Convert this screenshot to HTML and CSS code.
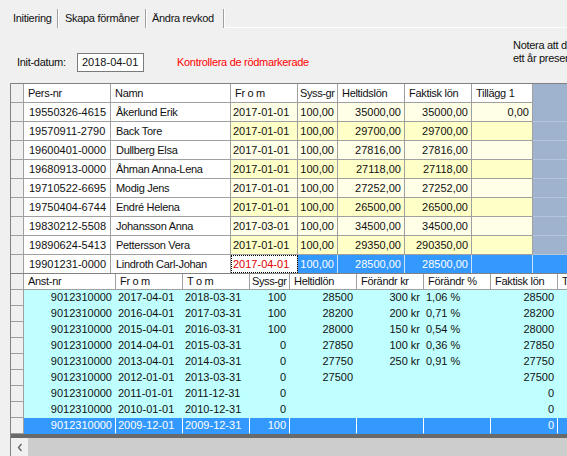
FILE: index.html
```html
<!DOCTYPE html>
<html lang="sv">
<head>
<meta charset="utf-8">
<title>Initiering</title>
<link rel="stylesheet" href="styles.css">
</head>
<body>
<div class="app">
  <div class="tabs">
    <div class="tab tab1 active">Initiering</div>
    <div class="tab tab2">Skapa förmåner</div>
    <div class="tab tab3">Ändra revkod</div>
    <div class="tab-fill"></div>
  </div>

  <div class="form-top">
    <span class="lbl">Init-datum:</span>
    <div class="textbox">2018-04-01</div>
    <span class="warn">Kontrollera de rödmarkerade</span>
    <div class="note">Notera att datum äldre än<br>ett år presenteras i rött</div>
  </div>

  <div class="grids">
    <div class="grid upper">
      <div class="row head">
        <div class="c rh"></div><div class="c h">Pers-nr</div><div class="c h">Namn</div><div class="c h">Fr o m</div><div class="c h h2">Syss-gr</div><div class="c h">Heltidslön</div><div class="c h">Faktisk lön</div><div class="c h">Tillägg 1</div><div class="c bgc"></div>
      </div>
      <div class="row odd">
        <div class="c rh"></div><div class="c w p5">19550326-4615</div><div class="c w p5 nm">Åkerlund Erik</div><div class="c y">2017-01-01</div><div class="c y r">100,00</div><div class="c y r">35000,00</div><div class="c y r">35000,00</div><div class="c y r">0,00</div><div class="c bgc"></div>
      </div>
      <div class="row even">
        <div class="c rh"></div><div class="c w p5">19570911-2790</div><div class="c w p5 nm">Back Tore</div><div class="c y">2017-01-01</div><div class="c y r">100,00</div><div class="c y r">29700,00</div><div class="c y r">29700,00</div><div class="c y r"></div><div class="c bgc"></div>
      </div>
      <div class="row odd">
        <div class="c rh"></div><div class="c w p5">19600401-0000</div><div class="c w p5 nm">Dullberg Elsa</div><div class="c y">2017-01-01</div><div class="c y r">100,00</div><div class="c y r">27816,00</div><div class="c y r">27816,00</div><div class="c y r"></div><div class="c bgc"></div>
      </div>
      <div class="row even">
        <div class="c rh"></div><div class="c w p5">19680913-0000</div><div class="c w p5 nm">Åhman Anna-Lena</div><div class="c y">2017-01-01</div><div class="c y r">100,00</div><div class="c y r">27118,00</div><div class="c y r">27118,00</div><div class="c y r"></div><div class="c bgc"></div>
      </div>
      <div class="row odd">
        <div class="c rh"></div><div class="c w p5">19710522-6695</div><div class="c w p5 nm">Modig Jens</div><div class="c y">2017-01-01</div><div class="c y r">100,00</div><div class="c y r">27252,00</div><div class="c y r">27252,00</div><div class="c y r"></div><div class="c bgc"></div>
      </div>
      <div class="row even">
        <div class="c rh"></div><div class="c w p5">19750404-6744</div><div class="c w p5 nm">Endré Helena</div><div class="c y">2017-01-01</div><div class="c y r">100,00</div><div class="c y r">26500,00</div><div class="c y r">26500,00</div><div class="c y r"></div><div class="c bgc"></div>
      </div>
      <div class="row odd">
        <div class="c rh"></div><div class="c w p5">19830212-5508</div><div class="c w p5 nm">Johansson Anna</div><div class="c y">2017-03-01</div><div class="c y r">100,00</div><div class="c y r">34500,00</div><div class="c y r">34500,00</div><div class="c y r"></div><div class="c bgc"></div>
      </div>
      <div class="row even">
        <div class="c rh"></div><div class="c w p5">19890624-5413</div><div class="c w p5 nm">Pettersson Vera</div><div class="c y">2017-01-01</div><div class="c y r">100,00</div><div class="c y r">29350,00</div><div class="c y r">290350,00</div><div class="c y r"></div><div class="c bgc"></div>
      </div>
      <div class="row sel last">
        <div class="c rh"></div><div class="c w p5">19901231-0000</div><div class="c w p5 nm">Lindroth Carl-Johan</div><div class="c focus">2017-04-01</div><div class="c s r">100,00</div><div class="c s r">28500,00</div><div class="c s r">28500,00</div><div class="c s r"></div><div class="c s"></div>
      </div>
    </div>

    <div class="grid lower">
      <div class="row head">
        <div class="c rh"></div><div class="c h">Anst-nr</div><div class="c h">Fr o m</div><div class="c h">T o m</div><div class="c h h2">Syss-gr</div><div class="c h">Heltidlön</div><div class="c h">Förändr kr</div><div class="c h">Förändr %</div><div class="c h">Faktisk lön</div><div class="c h">T</div>
      </div>
      <div class="row cy">
        <div class="c rh"></div><div class="c r">9012310000</div><div class="c">2017-04-01</div><div class="c">2018-03-31</div><div class="c r">100</div><div class="c r">28500</div><div class="c r">300 kr</div><div class="c">1,06 %</div><div class="c r">28500</div><div class="c"></div>
      </div>
      <div class="row cy">
        <div class="c rh"></div><div class="c r">9012310000</div><div class="c">2016-04-01</div><div class="c">2017-03-31</div><div class="c r">100</div><div class="c r">28200</div><div class="c r">200 kr</div><div class="c">0,71 %</div><div class="c r">28200</div><div class="c"></div>
      </div>
      <div class="row cy">
        <div class="c rh"></div><div class="c r">9012310000</div><div class="c">2015-04-01</div><div class="c">2016-03-31</div><div class="c r">100</div><div class="c r">28000</div><div class="c r">150 kr</div><div class="c">0,54 %</div><div class="c r">28000</div><div class="c"></div>
      </div>
      <div class="row cy">
        <div class="c rh"></div><div class="c r">9012310000</div><div class="c">2014-04-01</div><div class="c">2015-03-31</div><div class="c r">0</div><div class="c r">27850</div><div class="c r">100 kr</div><div class="c">0,36 %</div><div class="c r">27850</div><div class="c"></div>
      </div>
      <div class="row cy">
        <div class="c rh"></div><div class="c r">9012310000</div><div class="c">2013-04-01</div><div class="c">2014-03-31</div><div class="c r">0</div><div class="c r">27750</div><div class="c r">250 kr</div><div class="c">0,91 %</div><div class="c r">27750</div><div class="c"></div>
      </div>
      <div class="row cy">
        <div class="c rh"></div><div class="c r">9012310000</div><div class="c">2012-01-01</div><div class="c">2013-03-31</div><div class="c r">0</div><div class="c r">27500</div><div class="c r"></div><div class="c"></div><div class="c r">27500</div><div class="c"></div>
      </div>
      <div class="row cy">
        <div class="c rh"></div><div class="c r">9012310000</div><div class="c">2011-01-01</div><div class="c">2011-12-31</div><div class="c r">0</div><div class="c r"></div><div class="c r"></div><div class="c"></div><div class="c r">0</div><div class="c"></div>
      </div>
      <div class="row cy">
        <div class="c rh"></div><div class="c r">9012310000</div><div class="c">2010-01-01</div><div class="c">2010-12-31</div><div class="c r">0</div><div class="c r"></div><div class="c r"></div><div class="c"></div><div class="c r">0</div><div class="c"></div>
      </div>
      <div class="row lsel">
        <div class="c rh"></div><div class="c r">9012310000</div><div class="c">2009-12-01</div><div class="c">2009-12-31</div><div class="c r">100</div><div class="c r"></div><div class="c r"></div><div class="c"></div><div class="c r">0</div><div class="c"></div>
      </div>
    </div>

    <div class="hbar"></div>
    <div class="hscroll">
      <div class="arrow">
        <svg width="6" height="9" viewBox="0 0 6 9"><polyline points="4.5,1 1.5,4.5 4.5,8" fill="none" stroke="#606060" stroke-width="1.3"/></svg>
      </div>
      <div class="thumb"></div>
    </div>
  </div>
</div>
</body>
</html>
```

FILE: styles.css
```css
html, body {
  margin: 0;
  padding: 0;
}
body {
  background: #f0f0f0;
  font-family: "Liberation Sans", Arial, sans-serif;
  font-size: 11px;
  color: #111;
}
.app {
  width: 567px;
  height: 456px;
  overflow: hidden;
  background: #f0f0f0;
}

/* tabs */
.tabs {
  display: flex;
  height: 28px;
  padding-left: 3px;
  box-sizing: border-box;
}
.tab {
  box-sizing: border-box;
  margin-top: 9px;
  height: 19px;
  padding-top: 2px;
  line-height: 14px;
  white-space: nowrap;
  letter-spacing: -0.3px;
  border-right: 1px solid #a0a0a0;
  box-shadow: 1px 0 0 #ffffff;
}
.tab1 { width: 55px; padding-left: 10px; }
.tab2 { width: 88px; padding-left: 7px; }
.tab3 { width: 78px; padding-left: 6px; }
.tab-fill {
  flex: 1;
  border-bottom: 1px solid #ffffff;
}

/* form top */
.form-top {
  display: grid;
  grid-template-columns: 17px 60px 67px 33px 336px auto;
  height: 55px;
  align-items: start;
}
.lbl {
  grid-column: 2;
  margin-top: 28px;
  line-height: 13px;
  white-space: nowrap;
  letter-spacing: -0.3px;
}
.textbox {
  grid-column: 3;
  margin-top: 25px;
  height: 19px;
  box-sizing: border-box;
  border: 1px solid #7a7a7a;
  background: #ffffff;
  padding-left: 4px;
  line-height: 17px;
}
.warn {
  grid-column: 5;
  margin-top: 28px;
  line-height: 13px;
  color: #ff0000;
  white-space: nowrap;
  letter-spacing: -0.3px;
}
.note {
  grid-column: 6;
  margin-top: 11px;
  line-height: 13px;
  white-space: nowrap;
  letter-spacing: -0.3px;
}

/* grids */
.grids {
  margin-left: 10px;
  border-left: 1px solid #828282;
}
.grid .row {
  display: grid;
}
.upper {
  border-top: 1px solid #828282;
}
.upper .row {
  grid-template-columns: 13px 87px 120px 67px 40px 67px 67px 61px 40px;
  height: 19px;
}
.upper .row.last {
  height: 18px;
}
.c {
  box-sizing: border-box;
  border-right: 1px solid #a0a0a0;
  border-bottom: 1px solid #a0a0a0;
  padding: 0 3px 0 2px;
  white-space: nowrap;
  overflow: hidden;
}
.upper .c { line-height: 18px; }
.upper .last .c { border-bottom: none; }
.r { text-align: right; }
.p5 { padding-left: 5px; }
.nm { letter-spacing: -0.3px; }
.rh { background: #f0f0f0; }
.h { background: #ffffff; padding-left: 4px; padding-right: 0; letter-spacing: -0.3px; }
.h2 { padding-left: 2px; letter-spacing: -0.4px; }
.w { background: #ffffff; }
.odd .y { background: #ffffe8; }
.even .y { background: #ffffc8; }
.bgc {
  background: #9fb3ce;
  border-right: none;
  border-bottom-color: #b4c5dc;
}
.head .bgc { border-bottom-color: #9fb3ce; }
.focus {
  background: #ffffff;
  color: #e00000;
  outline: 1px dotted #000000;
  outline-offset: -1px;
}
.s {
  background: #3399ff;
  color: #ffffff;
  border-right-color: #cfe3f7;
}

.lower {
  border-top: 1px solid #828282;
}
.lower .row {
  grid-template-columns: 13px 92px 67px 67px 40px 67px 67px 67px 67px 67px;
  height: 16px;
}
.lower .c { line-height: 15px; }
.cy .c {
  background: #c0ffff;
  border-color: #c0ffff;
}
.lsel .c {
  background: #3399ff;
  color: #ffffff;
  border-right-color: #ffffff;
  border-bottom-color: #3399ff;
}
.lower .row .rh {
  background: #f0f0f0;
  border-right-color: #a0a0a0;
  border-bottom-color: #a0a0a0;
}

.hbar {
  height: 4px;
  background: #696969;
}
.hscroll {
  display: flex;
  height: 18px;
}
.arrow {
  width: 17px;
  background: #f0f0f0;
  display: flex;
  align-items: center;
  justify-content: center;
}
.thumb {
  flex: 1;
  background: #cdcdcd;
}
```
